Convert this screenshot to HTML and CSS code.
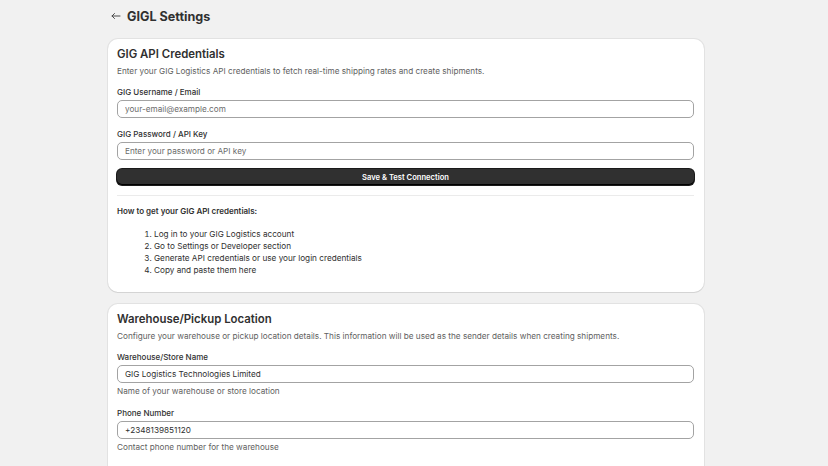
FILE: index.html
```html
<!DOCTYPE html>
<html lang="en">

<head>
    <meta charset="UTF-8">
    <meta name="viewport" content="width=device-width, initial-scale=1.0">
    <title>GIGL Settings</title>
    <link rel="stylesheet" href="styles.css">
</head>

<body>
    <div class="page">
        <div class="page-header">
            <button class="back-btn" type="button" aria-label="Back">
                <svg width="10" height="10" viewBox="0 0 20 20">
                    <path d="M18 10H2M7 5l-5 5 5 5" fill="none" stroke="#4a4a4a" stroke-width="2" stroke-linecap="round" stroke-linejoin="round"/>
                </svg>
            </button>
            <h1>GIGL Settings</h1>
        </div>

        <div class="card">
            <h2>GIG API Credentials</h2>
            <p class="subdued">Enter your GIG Logistics API credentials to fetch real-time shipping rates and create shipments.</p>

            <div class="field">
                <label for="username">GIG Username / Email</label>
                <input type="text" id="username" placeholder="your-email@example.com">
            </div>

            <div class="field">
                <label for="password">GIG Password / API Key</label>
                <input type="text" id="password" placeholder="Enter your password or API key">
            </div>

            <button type="button" class="primary-btn">Save &amp; Test Connection</button>

            <hr class="divider">

            <p class="bold">How to get your GIG API credentials:</p>
            <ol class="steps">
                <li>Log in to your GIG Logistics account</li>
                <li>Go to Settings or Developer section</li>
                <li>Generate API credentials or use your login credentials</li>
                <li>Copy and paste them here</li>
            </ol>
        </div>

        <div class="card">
            <h2>Warehouse/Pickup Location</h2>
            <p class="subdued">Configure your warehouse or pickup location details. This information will be used as the sender details when creating shipments.</p>

            <div class="field">
                <label for="store">Warehouse/Store Name</label>
                <input type="text" id="store" value="GIG Logistics Technologies Limited">
                <span class="help">Name of your warehouse or store location</span>
            </div>

            <div class="field">
                <label for="phone">Phone Number</label>
                <input type="text" id="phone" value="+2348139851120">
                <span class="help">Contact phone number for the warehouse</span>
            </div>
        </div>
    </div>
</body>

</html>
```

FILE: styles.css
```css
* {
    box-sizing: border-box;
}

body {
    margin: 0;
    padding-right: 16px;
    background: #f1f1f1;
    font-family: Inter, "Noto Sans", sans-serif;
    color: #303030;
}

.page {
    width: 596px;
    margin: 0 auto;
    padding-top: 7px;
}

.page-header {
    display: flex;
    align-items: center;
    gap: 6px;
    height: 18px;
    margin-bottom: 14px;
}

.back-btn {
    border: none;
    background: none;
    padding: 0;
    margin-left: 3px;
    display: flex;
    align-items: center;
}

.page-header h1 {
    margin: 0;
    font-size: 12.6px;
    font-weight: 700;
    color: #303030;
}

.card {
    background: #fff;
    border-radius: 10px;
    box-shadow: 0 1px 0 rgba(26, 26, 26, 0.07), 0 0 0 1px rgba(0, 0, 0, 0.06);
    padding: 7px 10px 16px 9px;
    margin-bottom: 12px;
}

.card h2 {
    margin: 0 0 3px;
    font-size: 11.4px;
    font-weight: 600;
    line-height: 16px;
}

.subdued {
    margin: 0 0 9px;
    font-size: 8.2px;
    line-height: 12px;
    color: #616161;
}

.field {
    display: flex;
    flex-direction: column;
    margin-bottom: 10px;
}

.field label {
    font-size: 8px;
    font-weight: 500;
    line-height: 12px;
    margin-bottom: 2px;
}

.field input {
    height: 18px;
    border: 1px solid #a3a3a3;
    border-radius: 5px;
    padding: 0 7px;
    font-family: inherit;
    font-size: 8.2px;
    color: #303030;
}

.field input::placeholder {
    color: #6b6b6b;
}

.help {
    font-size: 8.2px;
    line-height: 12px;
    margin-top: 2px;
    color: #616161;
}

.primary-btn {
    display: block;
    width: 100%;
    height: 16px;
    margin-top: -1px;
    border: none;
    border-radius: 5px;
    background: #303030;
    box-shadow: inset 0 -1px 0 #000, 0 0 0 1px #1a1a1a;
    color: #fff;
    font-family: inherit;
    font-size: 7.6px;
    font-weight: 600;
}

.divider {
    border: none;
    border-top: 1px solid #ebebeb;
    margin: 10px 0 9px;
}

.bold {
    margin: 0;
    font-size: 8px;
    font-weight: 600;
    line-height: 12px;
}

.steps {
    margin: 11px 0 0;
    padding-left: 37px;
    font-size: 8.2px;
    line-height: 12px;
    color: #303030;
}
```
